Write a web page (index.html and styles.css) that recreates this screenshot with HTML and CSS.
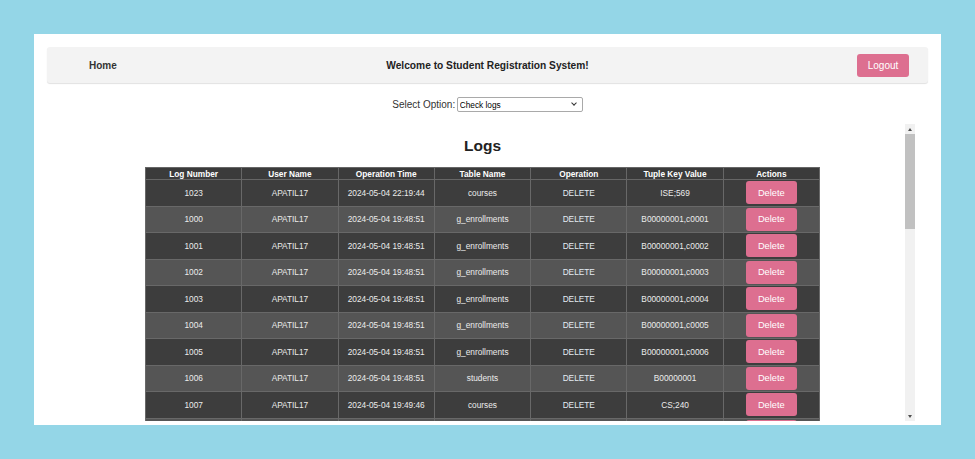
FILE: index.html
```html
<!DOCTYPE html>
<html lang="en">
<head>
<meta charset="utf-8">
<title>Student Registration System - Logs</title>
<link rel="stylesheet" href="styles.css">
</head>
<body>
<div class="panel">
  <header class="topbar">
    <a class="home" href="#">Home</a>
    <div class="title">Welcome to Student Registration System!</div>
    <div class="right"><button class="btn logout">Logout</button></div>
  </header>
  <div class="select-row">
    <label class="select-label" for="opt">Select Option:</label>
    <span class="select-wrap">
      <select id="opt" class="select">
        <option>Check logs</option>
        <option>Students</option>
        <option>Courses</option>
      </select>
    </span>
  </div>
  <div class="scroll-area">
    <div class="scroll-content">
      <h2 class="heading">Logs</h2>
      <table class="logs">
        <thead>
          <tr><th>Log Number</th><th>User Name</th><th>Operation Time</th><th>Table Name</th><th>Operation</th><th>Tuple Key Value</th><th>Actions</th></tr>
        </thead>
        <tbody>
          <tr><td>1023</td><td>APATIL17</td><td>2024-05-04 22:19:44</td><td>courses</td><td class="op">DELETE</td><td>ISE;569</td><td><button class="btn del">Delete</button></td></tr>
          <tr><td>1000</td><td>APATIL17</td><td>2024-05-04 19:48:51</td><td>g_enrollments</td><td class="op">DELETE</td><td>B00000001,c0001</td><td><button class="btn del">Delete</button></td></tr>
          <tr><td>1001</td><td>APATIL17</td><td>2024-05-04 19:48:51</td><td>g_enrollments</td><td class="op">DELETE</td><td>B00000001,c0002</td><td><button class="btn del">Delete</button></td></tr>
          <tr><td>1002</td><td>APATIL17</td><td>2024-05-04 19:48:51</td><td>g_enrollments</td><td class="op">DELETE</td><td>B00000001,c0003</td><td><button class="btn del">Delete</button></td></tr>
          <tr><td>1003</td><td>APATIL17</td><td>2024-05-04 19:48:51</td><td>g_enrollments</td><td class="op">DELETE</td><td>B00000001,c0004</td><td><button class="btn del">Delete</button></td></tr>
          <tr><td>1004</td><td>APATIL17</td><td>2024-05-04 19:48:51</td><td>g_enrollments</td><td class="op">DELETE</td><td>B00000001,c0005</td><td><button class="btn del">Delete</button></td></tr>
          <tr><td>1005</td><td>APATIL17</td><td>2024-05-04 19:48:51</td><td>g_enrollments</td><td class="op">DELETE</td><td>B00000001,c0006</td><td><button class="btn del">Delete</button></td></tr>
          <tr><td>1006</td><td>APATIL17</td><td>2024-05-04 19:48:51</td><td>students</td><td class="op">DELETE</td><td>B00000001</td><td><button class="btn del">Delete</button></td></tr>
          <tr><td>1007</td><td>APATIL17</td><td>2024-05-04 19:49:46</td><td>courses</td><td class="op">DELETE</td><td>CS;240</td><td><button class="btn del">Delete</button></td></tr>
          <tr class="peek"><td></td><td></td><td></td><td></td><td></td><td></td><td><button class="btn del" aria-label="Delete"></button></td></tr>
        </tbody>
      </table>
    </div>
    <div class="scrollbar" aria-hidden="true">
      <div class="sb-btn"><span class="arrow-up"></span></div>
      <div class="sb-track">
        <div class="sb-thumb"></div>
      </div>
      <div class="sb-btn"><span class="arrow-down"></span></div>
    </div>
  </div>
</div>
</body>
</html>
```
FILE: styles.css
```css
* { box-sizing: border-box; }

html, body { height: 100%; }

body {
  margin: 0;
  padding: 34px;
  background: #94d6e7;
  font-family: "Liberation Sans", Arial, sans-serif;
  color: #333;
}

.panel {
  height: 391px;
  background: #ffffff;
  padding: 13px 13px 0;
  display: flex;
  flex-direction: column;
}

.topbar {
  height: 36px;
  flex: none;
  background: #f3f3f3;
  border-radius: 3px;
  box-shadow: 0 1px 1px rgba(0, 0, 0, 0.12);
  display: grid;
  grid-template-columns: 1fr auto 1fr;
  align-items: center;
  padding: 0 19px;
}

.home {
  font-size: 10px;
  font-weight: bold;
  color: #333;
  text-decoration: none;
  justify-self: start;
  margin-left: 23px;
}

.title {
  font-size: 10.2px;
  font-weight: bold;
  color: #222;
}

.right {
  justify-self: end;
  display: flex;
}

.btn {
  font-family: "Liberation Sans", Arial, sans-serif;
  background: #dd6f90;
  color: #ffffff;
  border: none;
  border-radius: 3px;
  padding: 0;
  cursor: pointer;
}

.logout {
  width: 52px;
  height: 23px;
  font-size: 10px;
}

.select-row {
  flex: none;
  margin-top: 14px;
  display: flex;
  justify-content: center;
  align-items: center;
  gap: 1.5px;
}

.select-label {
  font-size: 10px;
  color: #333;
}

.select-wrap {
  position: relative;
  display: block;
  width: 126px;
  height: 15px;
}

.select-wrap::after {
  content: "";
  position: absolute;
  right: 7px;
  top: 4px;
  width: 3px;
  height: 3px;
  border-right: 1.3px solid #333;
  border-bottom: 1.3px solid #333;
  transform: rotate(45deg);
  pointer-events: none;
}

.select {
  -webkit-appearance: none;
  appearance: none;
  display: block;
  width: 126px;
  height: 15px;
  font-size: 8.3px;
  font-family: "Liberation Sans", Arial, sans-serif;
  padding: 0 14px 0 2px;
  color: #000;
  border: 1px solid #a9a9a9;
  border-radius: 2px;
  background: #fff;
}

.scroll-area {
  flex: none;
  width: 854px;
  height: 297px;
  margin: 12px auto 0;
  display: flex;
}

.scroll-content {
  flex: 1;
  min-width: 0;
  overflow: hidden;
}

.scrollbar {
  flex: none;
  width: 10px;
  background: #f1f1f1;
  display: flex;
  flex-direction: column;
}

.sb-btn {
  flex: none;
  height: 10px;
  display: flex;
  align-items: center;
  justify-content: center;
}

.arrow-up {
  width: 0;
  height: 0;
  border-left: 2.5px solid transparent;
  border-right: 2.5px solid transparent;
  border-bottom: 3px solid #505050;
}

.arrow-down {
  width: 0;
  height: 0;
  border-left: 2.5px solid transparent;
  border-right: 2.5px solid transparent;
  border-top: 3px solid #505050;
}

.sb-track {
  flex: 1;
}

.sb-thumb {
  height: 95px;
  background: #c1c1c1;
}

.heading {
  font-size: 15.5px;
  font-weight: bold;
  color: #222;
  text-align: center;
  margin: 13px 0 13px;
  line-height: 17px;
}

.logs {
  width: 675px;
  margin: 0 auto 16px;
  border-collapse: collapse;
  table-layout: fixed;
  font-size: 8.3px;
  color: #ececec;
  text-align: center;
  border: 1px solid #9a9a9a;
}

.logs th {
  background: #3b3b3b;
  color: #ffffff;
  font-weight: bold;
  line-height: 10px;
  padding: 0.5px 2px;
  border: 1px solid #666;
}

.logs td {
  padding: 1.25px 2px;
  border: 1px solid #686868;
  vertical-align: middle;
}

.logs tbody tr:nth-child(odd) { background: #3d3d3d; }
.logs tbody tr:nth-child(even) { background: #555555; }

.op { color: #e4ebf3; }

.del {
  display: block;
  margin: 0 auto;
  width: 51px;
  height: 23px;
  font-size: 9.3px;
}
```
